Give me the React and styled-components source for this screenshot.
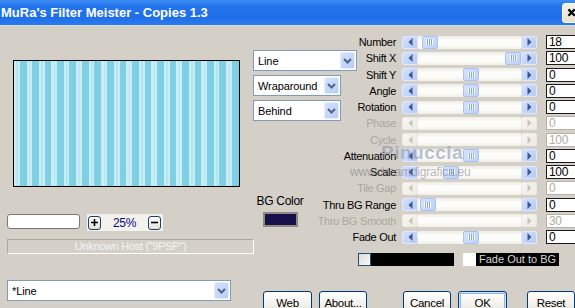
import React from 'react';
import styled, { createGlobalStyle } from 'styled-components';

const GlobalStyle = createGlobalStyle`
  html, body {
    margin: 0;
    padding: 0;
    background: #d4d0c8;
  }
  body {
    font-family: "Liberation Sans", Arial, sans-serif;
  }
`;

const Window = styled.div`
  position: relative;
  width: 575px;
  height: 308px;
  overflow: hidden;
  background: #d4d0c8;
  font-size: 11px;
  letter-spacing: -0.3px;
  color: #000;
`;

const TitleBar = styled.div`
  display: flex;
  align-items: center;
  justify-content: space-between;
  height: 25px;
  background: linear-gradient(#3d8df5, #2375ec 25%, #1f6ee9 70%, #2a7bef);
  border-bottom: 1px solid #d9e2f2;
`;

const Title = styled.div`
  padding-left: 1px;
  color: #fff;
  font-weight: bold;
  font-size: 13px;
  letter-spacing: 0;
`;

const CloseBtn = styled.div`
  display: flex;
  align-items: center;
  justify-content: center;
  width: 21px;
  height: 20px;
  margin-right: -8px;
  box-sizing: border-box;
  background: linear-gradient(#f4f2e8, #e6e2d2);
  border: 1px solid #fff;
  border-radius: 3px;
`;

const Body = styled.div`
  display: flex;
  padding-top: 8px;
`;

const LeftCol = styled.div`
  display: flex;
  flex-direction: column;
  width: 246px;
  margin-left: 7px;
`;

const Preview = styled.div`
  box-sizing: border-box;
  width: 227px;
  height: 127px;
  margin: 26px 0 0 6px;
  border: 1px solid #000;
  background-color: #c6ecf6;
  background-image: repeating-linear-gradient(
    90deg,
    #c8edf7 0px,
    #c8edf7 2px,
    #b6e5f2 2px,
    #b6e5f2 3.5px,
    #c8edf7 3.5px,
    #c8edf7 5.5px,
    #80d0e5 5.5px,
    #7dcfe4 12.5px
  );
`;

const ZoomRow = styled.div`
  display: flex;
  align-items: flex-start;
  margin-top: 27px;
`;

const ZoomInput = styled.div`
  box-sizing: border-box;
  width: 73px;
  height: 15px;
  background: #fff;
  border: 1px solid #7a7a72;
  border-radius: 3px;
`;

const ZoomBox = styled.div`
  display: flex;
  align-items: center;
  width: 76px;
  height: 17px;
  margin-left: 7px;
  padding: 0 2px 0 1px;
  box-sizing: border-box;
  background: #f3f2ed;
`;

const ZoomBtn = styled.div`
  display: flex;
  align-items: center;
  justify-content: center;
  width: 13px;
  height: 14px;
  box-sizing: border-box;
  border: 1px solid #1f3f6c;
  border-radius: 3px;
  background: linear-gradient(#ffffff, #e4e1d8);
`;

const Percent = styled.div`
  flex: 1;
  text-align: center;
  color: #0a0a80;
  font-size: 12px;
`;

const Status = styled.div`
  box-sizing: border-box;
  width: 247px;
  height: 15px;
  margin-top: 8px;
  border: 1px solid;
  border-color: #aca899 #fff #fff #aca899;
  color: #f3f3f3;
  font-size: 11px;
  line-height: 13px;
  text-align: center;
`;

const SelectBox = styled.div`
  display: flex;
  align-items: center;
  justify-content: space-between;
  box-sizing: border-box;
  width: ${p => p.$w}px;
  height: 21px;
  margin-top: ${p => p.$mt || 0}px;
  padding: 1px 1px 1px 4px;
  background: #fff;
  border: 1px solid #7f9db9;
  font-size: 11px;
  letter-spacing: -0.1px;
`;

const DropBtn = styled.div`
  display: flex;
  align-items: center;
  justify-content: center;
  width: 15px;
  height: 17px;
  box-sizing: border-box;
  border: 1px solid #e6eefc;
  border-radius: 2px;
  background: linear-gradient(135deg, #d6e2fd, #b7ccf8);
`;

const RightArea = styled.div`
  display: flex;
  flex-direction: column;
  flex: 1;
`;

const TopRow = styled.div`
  display: flex;
`;

const MidCol = styled.div`
  display: flex;
  flex-direction: column;
  width: 63px;
`;

const BgBlock = styled.div`
  display: flex;
  flex-direction: column;
  align-items: center;
  width: 50px;
  margin: 74px 0 0 2px;
`;

const BgLabel = styled.div`
  font-size: 12px;
  line-height: 13px;
  white-space: nowrap;
`;

const Swatch = styled.div`
  box-sizing: border-box;
  width: 35px;
  height: 15px;
  margin-top: 4px;
  border: 2px solid #8d8a82;
  background: #17104a;
`;

const SliderTable = styled.div`
  display: grid;
  grid-template-columns: 80px 135px 32px;
  grid-auto-rows: 16.25px;
  column-gap: 6px;
  align-items: center;
`;

const Label = styled.div`
  text-align: right;
  white-space: nowrap;
  color: ${p => (p.$disabled ? '#aaa79b' : '#000')};
`;

const SliderWrap = styled.div`
  display: flex;
  height: 13px;
`;

const ArrowBtn = styled.div`
  display: flex;
  align-items: center;
  justify-content: center;
  width: 16px;
  height: 13px;
  box-sizing: border-box;
  border-radius: 2px;
  border: 1px solid ${p => (p.$disabled ? '#eceae2' : '#dfe8fc')};
  background: ${p =>
    p.$disabled
      ? 'linear-gradient(135deg, #f7f6f2, #ecebe4)'
      : 'linear-gradient(135deg, #d3e0fd, #b6cbf7)'};
`;

const Track = styled.div`
  position: relative;
  flex: 1;
  background: linear-gradient(#eeece3, #fdfdfb 35%, #fbfbf8 70%, #f1f0e9);
`;

const Thumb = styled.div`
  position: absolute;
  top: 0;
  width: 16px;
  height: 13px;
  box-sizing: border-box;
  border: 1px solid #aac1f2;
  border-radius: 2px;
  background: linear-gradient(135deg, #d7e3fd, #bcd0f9);
  display: flex;
  align-items: center;
  justify-content: center;

  &::after {
    content: '';
    width: 7px;
    height: 6px;
    background: repeating-linear-gradient(90deg, #f4f8ff 0 1px, #8ea8de 1px 2px);
  }
`;

const ValueBox = styled.div`
  box-sizing: border-box;
  width: 30px;
  height: 14px;
  margin-left: 3px;
  padding-left: 2px;
  background: #fff;
  border: 1px solid ${p => (p.$disabled ? '#b4b1a6' : '#1a1a1a')};
  border-right-color: #fff;
  color: ${p => (p.$disabled ? '#b0ada2' : '#000')};
  font-size: 12px;
  line-height: 12px;
`;

const BarsRow = styled.div`
  display: flex;
  margin: 8px 0 0 105px;
`;

const CheckBox = styled.div`
  box-sizing: border-box;
  width: 13px;
  height: 13px;
  border: 1px solid #1c5180;
  background: linear-gradient(135deg, #dcdbd4, #fbfbf9);
`;

const BlackBar = styled.div`
  width: 83px;
  height: 13px;
  background: #000;
  color: #d6d6d6;
  font-size: 11px;
  line-height: 13px;
  padding-left: 3px;
  box-sizing: border-box;
  letter-spacing: 0;
`;

const WhiteSquare = styled.div`
  width: 13px;
  height: 13px;
  margin-left: 9px;
  background: #fff;
`;

const ButtonsRow = styled.div`
  display: flex;
  margin: 25px 0 0 10px;
`;

const Button = styled.div`
  display: flex;
  align-items: center;
  justify-content: center;
  flex-shrink: 0;
  box-sizing: border-box;
  width: ${p => p.$w}px;
  height: 23px;
  margin-left: ${p => p.$gap || 0}px;
  border: 1px solid #003c74;
  border-radius: 3px;
  background: linear-gradient(#ffffff, #f2f1ec 60%, #e3dfd4);
  box-shadow: ${p => (p.$default ? 'inset 0 0 0 1px #cee0fb, inset 0 0 0 2px #90b5ee' : 'none')};
  font-size: 11.5px;
`;

const Watermark = styled.div`
  position: absolute;
  left: ${p => p.$x}px;
  top: ${p => p.$y}px;
  pointer-events: none;
  white-space: nowrap;
  color: ${p => p.$color};
  font-size: ${p => p.$size}px;
  font-weight: ${p => (p.$bold ? 'bold' : 'normal')};
  letter-spacing: ${p => p.$spacing}px;
`;

const Arrow = ({ dir, disabled }) => (
  <svg width="5" height="8" viewBox="0 0 5 8">
    <polygon
      points={dir === 'left' ? '4.5,0 0.5,4 4.5,8' : '0.5,0 4.5,4 0.5,8'}
      fill={disabled ? '#c9c6b8' : '#3f5690'}
    />
  </svg>
);

const Chevron = () => (
  <svg width="9" height="6" viewBox="0 0 9 6">
    <polyline points="1,1 4.5,4.5 8,1" fill="none" stroke="#4d6185" strokeWidth="2" />
  </svg>
);

const Select = ({ label, w, mt }) => (
  <SelectBox $w={w} $mt={mt}>
    <span>{label}</span>
    <DropBtn>
      <Chevron />
    </DropBtn>
  </SelectBox>
);

const Slider = ({ pos, disabled }) => (
  <SliderWrap>
    <ArrowBtn $disabled={disabled}>
      <Arrow dir="left" disabled={disabled} />
    </ArrowBtn>
    <Track>
      {!disabled && <Thumb style={{ left: `calc(${pos} * (100% - 16px))` }} />}
    </Track>
    <ArrowBtn $disabled={disabled}>
      <Arrow dir="right" disabled={disabled} />
    </ArrowBtn>
  </SliderWrap>
);

const params = [
  { label: 'Number', value: '18', pos: 0.045 },
  { label: 'Shift X', value: '100', pos: 1 },
  { label: 'Shift Y', value: '0', pos: 0.52 },
  { label: 'Angle', value: '0', pos: 0.52 },
  { label: 'Rotation', value: '0', pos: 0.52 },
  { label: 'Phase', value: '0', disabled: true },
  { label: 'Cycle', value: '100', disabled: true },
  { label: 'Attenuation', value: '0', pos: 0.52 },
  { label: 'Scale', value: '100', pos: 0.29 },
  { label: 'Tile Gap', value: '0', disabled: true },
  { label: 'Thru BG Range', value: '0', pos: 0.02 },
  { label: 'Thru BG Smooth', value: '30', disabled: true },
  { label: 'Fade Out', value: '0', pos: 0.52 },
];

export default function App() {
  return (
    <Window>
      <GlobalStyle />
      <TitleBar>
        <Title>MuRa's Filter Meister - Copies 1.3</Title>
        <CloseBtn>
          <svg width="21" height="20" viewBox="0 0 21 20">
            <path d="M6 6 L13 13 M13 6 L6 13" stroke="#000" strokeWidth="2.4" />
          </svg>
        </CloseBtn>
      </TitleBar>

      <Body>
        <LeftCol>
          <Preview />
          <ZoomRow>
            <ZoomInput />
            <ZoomBox>
              <ZoomBtn>
                <svg width="7" height="7" viewBox="0 0 7 7">
                  <path d="M0 3.5 H7 M3.5 0 V7" stroke="#000" strokeWidth="1.6" />
                </svg>
              </ZoomBtn>
              <Percent>25%</Percent>
              <ZoomBtn>
                <svg width="7" height="7" viewBox="0 0 7 7">
                  <path d="M0 3.5 H7" stroke="#000" strokeWidth="1.6" />
                </svg>
              </ZoomBtn>
            </ZoomBox>
          </ZoomRow>
          <Status>Unknown Host ("9PSP")</Status>
          <Select label="*Line" w={224} mt={26} />
        </LeftCol>

        <RightArea>
          <TopRow>
            <MidCol>
              <Select label="Line" w={104} mt={16} />
              <Select label="Wraparound" w={88} mt={4} />
              <Select label="Behind" w={88} mt={4} />
              <BgBlock>
                <BgLabel>BG Color</BgLabel>
                <Swatch />
              </BgBlock>
            </MidCol>

            <SliderTable>
              {params.map(p => (
                <React.Fragment key={p.label}>
                  <Label $disabled={p.disabled}>{p.label}</Label>
                  <Slider pos={p.pos} disabled={p.disabled} />
                  <ValueBox $disabled={p.disabled}>{p.value}</ValueBox>
                </React.Fragment>
              ))}
            </SliderTable>
          </TopRow>

          <BarsRow>
            <CheckBox />
            <BlackBar />
            <WhiteSquare />
            <BlackBar>Fade Out to BG</BlackBar>
          </BarsRow>

          <ButtonsRow>
            <Button $w={49}>Web</Button>
            <Button $w={48} $gap={7}>About...</Button>
            <Button $w={48} $gap={36}>Cancel</Button>
            <Button $w={49} $gap={7} $default>OK</Button>
            <Button $w={48} $gap={20}>Reset</Button>
          </ButtonsRow>
        </RightArea>
      </Body>

      <Watermark $x={381} $y={142} $size={19} $bold $spacing={0.5} $color="rgba(128, 140, 172, 0.55)">
        Pinuccia
      </Watermark>
      <Watermark $x={350} $y={165} $size={12} $spacing={-0.2} $color="rgba(110, 110, 120, 0.5)">
        www.dreamdigrafica.eu
      </Watermark>
    </Window>
  );
}
